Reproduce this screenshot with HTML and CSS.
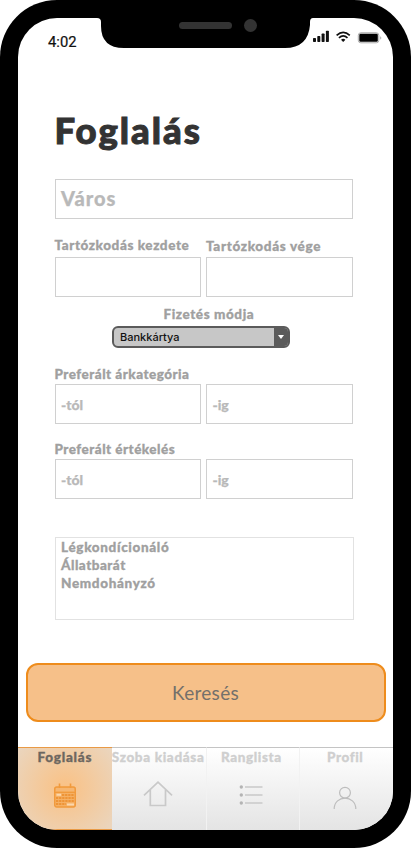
FILE: index.html
```html
<!DOCTYPE html>
<html lang="hu">
<head>
<meta charset="utf-8">
<title>Foglalás</title>
<link rel="stylesheet" href="styles.css">
</head>
<body>
<div class="phone">
  <div class="screen">
    <header class="status">
      <span class="clock">4:02</span>
      <svg class="notch" width="216" height="30" viewBox="0 0 216 30">
        <path d="M0 0H216Q213 0 213 4V7Q211 30 188 30H27Q4 30 4 8V4Q4 0 0 0Z" fill="#000"/>
        <rect x="82" y="4" width="53" height="7" rx="3.5" fill="#333"/>
        <circle cx="153.500" cy="7.500" r="6.500" fill="#333"/>
      </svg>
      <svg class="signals" width="72" height="16" viewBox="0 0 72 16">
        <g fill="#111">
          <rect x="1" y="8" width="3" height="4" rx=".7"/>
          <rect x="5.300" y="6" width="3" height="6" rx=".7"/>
          <rect x="9.600" y="3.500" width="3" height="8.500" rx=".7"/>
          <rect x="13.900" y=".8" width="3" height="11.200" rx=".7"/>
          <path d="M29 9.700Q31.200 8 33.400 9.700L31.200 12Z"/>
        </g>
        <g fill="none" stroke="#111" stroke-width="1.700">
          <path d="M24.600 5.300Q31.200-.7 37.800 5.300"/>
          <path d="M26.900 7.800Q31.200 4 35.500 7.800"/>
        </g>
        <rect x="46.300" y="2.800" width="20.500" height="10" rx="2.500" fill="none" stroke="#aaa"/>
        <rect x="47.300" y="3.800" width="18.500" height="8" rx="1.200" fill="#000"/>
        <path d="M68.200 6.300Q70.500 8 68.200 9.700Z" fill="#aaa"/>
      </svg>
    </header>
    <main class="form">
      <h1 class="title">Foglalás</h1>
      <div class="field city">Város</div>
      <div class="pair dates">
        <span class="label start">Tartózkodás kezdete</span>
        <span class="label end">Tartózkodás vége</span>
        <div class="field"></div>
        <div class="field"></div>
      </div>
      <div class="label payment">Fizetés módja</div>
      <div class="select">
        <span class="value">Bankkártya</span>
        <span class="arrow"><svg width="6" height="4" viewBox="0 0 6 4"><path d="M0 0H6L3 4Z" fill="#fff"/></svg></span>
      </div>
      <div class="pair price">
        <span class="label wide">Preferált árkategória</span>
        <div class="field">-tól</div>
        <div class="field">-ig</div>
      </div>
      <div class="pair rating">
        <span class="label wide">Preferált értékelés</span>
        <div class="field">-tól</div>
        <div class="field">-ig</div>
      </div>
      <ul class="options">
        <li>Légkondícionáló</li>
        <li class="pets">Állatbarát</li>
        <li>Nemdohányzó</li>
      </ul>
    </main>
    <div class="search">Keresés</div>
    <nav class="tabs">
      <div class="tab active">
        <span class="name">Foglalás</span>
        <svg width="24" height="26" viewBox="0 0 24 26" fill="none" stroke="#f19a3c">
          <rect x="1.700" y="4" width="20.600" height="20" rx="2" stroke-width="1.400" fill="#f5b064"/>
          <path d="M6.500 .5V5M17.500 .5V5" stroke-width="1.600"/>
          <path d="M3 6.500H21" stroke="#f6b671" stroke-width="3"/>
          <path d="M2 9.300H22" stroke-width="1.200"/>
          <path d="M9 12H21M3 15H21M3 18H21M3 21H13" stroke="#ee9436" stroke-width="2" stroke-dasharray="2.300 .8"/>
          <path d="M3.500 11.800H8M14 21.400H21" stroke="#fbd7ad" stroke-width="2"/>
        </svg>
      </div>
      <div class="tab rent">
        <span class="name">Szoba kiadása</span>
        <svg width="30" height="26" viewBox="0 0 30 26" fill="none" stroke="#c9c9c9" stroke-width="1.700">
          <path d="M1 14.300L15 1.200L29 14.300M7.300 8.500V24.500H22.500V8.500"/>
        </svg>
      </div>
      <div class="tab rank">
        <span class="name">Ranglista</span>
        <svg width="24" height="22" viewBox="0 0 24 22" stroke="#c9c9c9" stroke-width="1.300">
          <path d="M6 3H23.500M6 11H23.500M6 19H23.500"/>
          <g fill="#b4b4b4" stroke="none"><circle cx="2.300" cy="3" r="1.700"/><circle cx="2.300" cy="11" r="1.700"/><circle cx="2.300" cy="19" r="1.700"/></g>
        </svg>
      </div>
      <div class="tab profile">
        <span class="name">Profil</span>
        <svg width="24" height="24" viewBox="0 0 24 24" fill="none" stroke="#bdbdbd" stroke-width="1.200">
          <circle cx="12" cy="6.700" r="5.400"/>
          <path d="M1.200 23C1.200 8.500 22.800 8.500 22.800 23"/>
        </svg>
      </div>
    </nav>
  </div>
</div>
</body>
</html>
```
FILE: styles.css
```css
* { box-sizing: border-box; }
body {
  margin: 0;
  background: #fff;
  font-family: Lato, sans-serif;
}
.phone {
  width: 411px;
  height: 848px;
  padding: 18px;
  background: #000;
  border-radius: 57px;
}
.screen {
  display: flex;
  flex-direction: column;
  width: 375px;
  height: 812px;
  background: #fff;
  border-radius: 39px;
  overflow: hidden;
}
.status {
  display: flex;
  align-items: flex-start;
  height: 36px;
  flex: none;
}
.clock {
  width: 79px;
  padding: 14px 0 0 30px;
  font: 400 14.800px/20px Roboto, sans-serif;
  color: #111;
  -webkit-text-stroke: .2px;
}
.notch { display: block; flex: none; }
.signals { flex: none; margin: 12px 0 0 -1px; }
.form {
  height: 591px;
  flex: none;
  padding: 54px 40px 0 36.500px;
}
.title {
  margin: 0 0 27px;
  font-size: 36.500px;
  line-height: 44px;
  font-weight: 900;
  color: #333;
  letter-spacing: 2px;
  -webkit-text-stroke: 1px;
}
.field {
  height: 40px;
  padding: 0 5.500px;
  border: 1px solid #d0d0d0;
  font-size: 14px;
  line-height: 39px;
  font-weight: 900;
  color: #b9b9b9;
  -webkit-text-stroke: .25px;
}
.city {
  width: 298px;
  font-size: 20px;
  line-height: 36px;
  letter-spacing: 1px;
}
.label, .options, .name {
  font-size: 13.500px;
  line-height: 18px;
  font-weight: 900;
  letter-spacing: .58px;
  color: #a0a0a0;
  white-space: nowrap;
  -webkit-text-stroke: .3px;
}
.pair {
  display: grid;
  grid-template-columns: 146.500px 146.500px;
  column-gap: 5px;
}
.dates { grid-template-rows: 21px 40px; margin-top: 17px; }
.end { padding-top: 1px; letter-spacing: .67px; }
.payment { margin-top: 8px; padding-left: 109px; }
.select {
  display: flex;
  width: 178px;
  height: 22px;
  margin: 3px 0 0 57.500px;
  border: 2px solid #5b5b5b;
  border-radius: 6px;
  background: #c7c7c7;
  overflow: hidden;
}
.value {
  flex: 1;
  padding-left: 6px;
  font: 500 11px/19px Inter, sans-serif;
  color: #111;
}
.arrow {
  display: flex;
  align-items: center;
  justify-content: center;
  width: 14px;
  background: #5b5b5b;
}
.price, .rating { grid-template-rows: 19px 40px; }
.price { margin-top: 17px; }
.rating { margin-top: 16px; }
.wide { grid-column: 1 / 3; letter-spacing: .48px; }
.options {
  width: 299.500px;
  height: 83px;
  margin: 38px 0 0;
  padding: 0 5.500px;
  border: 1px solid #e2e2e2;
  list-style: none;
  letter-spacing: .66px;
}
.pets { letter-spacing: .5px; }
.search {
  flex: none;
  height: 59px;
  margin: 18px 7.500px 0;
  border: 2px solid #ee8c1c;
  border-radius: 12px;
  background: #f6c089;
  font-size: 19px;
  line-height: 56px;
  text-align: center;
  color: #74706b;
  letter-spacing: .3px;
}
.tabs {
  display: grid;
  grid-template-columns: repeat(4, 1fr);
  height: 83px;
  flex: none;
  margin-top: 25px;
}
.tab {
  display: flex;
  flex-direction: column;
  align-items: center;
  border-top: 1px solid #c4c4c4;
  background: linear-gradient(#fff, #e4e4e4);
}
.active {
  border-top-color: #e99a45;
  border-bottom: 1px solid #e99a45;
  background: radial-gradient(circle 66px at 50% 50%, #fac184, #e9d7c3);
}
.tab + .tab + .tab { border-left: 1px solid #f2f2f2; padding-right: 3px; }
.name {
  margin: -.5px 0 17.500px;
  color: #cfcfcf;
}
.active .name { color: #6d6760; letter-spacing: .75px; }
.rent { padding-right: 1px; }
.rent .name { margin-bottom: 15px; letter-spacing: .65px; }
.rank .name { margin-bottom: 18.500px; }
.profile .name { margin-bottom: 20.500px; }
.tab svg { flex: none; }
```
